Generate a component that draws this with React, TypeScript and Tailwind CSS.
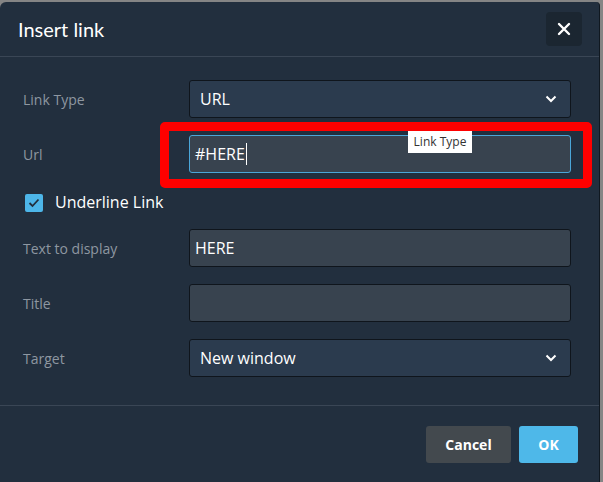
const font = { fontFamily: '"Open Sans", "Noto Sans", Arial, sans-serif' };

function Chevron() {
  return (
    <svg width="12" height="8" viewBox="0 0 12 8" className="shrink-0">
      <polyline points="1.5,1.5 6,6 10.5,1.5" fill="none" stroke="#fff" strokeWidth="2" />
    </svg>
  );
}

function Row({ label, children }: { label: string; children: React.ReactNode }) {
  return (
    <div className="flex h-[38px] items-center">
      <div className="w-[166px] text-[14px] text-[#8e97a1]">{label}</div>
      <div className="w-[382px]">{children}</div>
    </div>
  );
}

function Select({ value }: { value: string }) {
  return (
    <div className="flex h-[38px] items-center justify-between rounded-[3px] border border-[#0f151c] bg-[#2b3b4e] pl-[10px] pr-[13px] text-[16px] text-white">
      <span>{value}</span>
      <Chevron />
    </div>
  );
}

function Input({ value, focused }: { value?: string; focused?: boolean }) {
  return (
    <div
      className={
        "flex h-[38px] items-center rounded-[3px] border bg-[#38434f] pl-[5px] text-[16px] text-white " +
        (focused ? "border-[#4aa6d8]" : "border-[#0f151c]")
      }
    >
      <span>{value}</span>
      {focused && <span className="ml-[1px] h-[22px] w-px bg-white" />}
    </div>
  );
}

export default function App() {
  return (
    <div className="h-[482px] w-[603px] overflow-hidden bg-[#858585]" style={font}>
      <div className="relative mt-[2px] h-[480px] w-[600px] rounded-tl-[6px] rounded-tr-[4px] border-r border-[#101820] bg-[#222f3e]">
        <div className="flex h-[55px] items-center justify-between border-b border-[#3a4655] pl-[18px] pr-[17px]">
          <h1 className="text-[20px] text-white" style={{ fontFamily: 'Lato, "Open Sans", sans-serif' }}>
            Insert link
          </h1>
          <button className="flex h-[34px] w-[36px] items-center justify-center rounded-[4px] bg-[#1b2631]">
            <svg width="14" height="14" viewBox="0 0 14 14">
              <path d="M2 2 L12 12 M12 2 L2 12" stroke="#fff" strokeWidth="2.4" strokeLinecap="round" />
            </svg>
          </button>
        </div>

        <div className="flex flex-col gap-[17px] border-b border-[#3a4655] pb-[28px] pl-[23px] pt-[23px]">
          <Row label="Link Type">
            <Select value="URL" />
          </Row>
          <Row label="Url">
            <Input value="#HERE" focused />
          </Row>
          <div className="flex h-[22px] items-end pl-[2px]">
            <span className="flex h-[18px] w-[18px] items-center justify-center rounded-[2px] bg-[#4db6e9]">
              <svg width="12" height="10" viewBox="0 0 12 10">
                <polyline points="1.5,5 4.5,8 10.5,1.5" fill="none" stroke="#222f3e" strokeWidth="1.8" />
              </svg>
            </span>
            <span className="ml-[12px] text-[16px] leading-[19px] text-white">Underline Link</span>
          </div>
          <Row label="Text to display">
            <Input value="HERE" />
          </Row>
          <Row label="Title">
            <Input />
          </Row>
          <Row label="Target">
            <Select value="New window" />
          </Row>
        </div>

        <div className="flex justify-end gap-[8px] pr-[21px] pt-[20px]">
          <button className="h-[37px] w-[85px] rounded-[3px] bg-[#43494e] text-[14px] font-bold text-white">Cancel</button>
          <button className="h-[37px] w-[59px] rounded-[3px] bg-[#4eb8e9] text-[14px] font-bold text-white">OK</button>
        </div>

        <div className="absolute left-[160px] top-[120px] h-[66px] w-[432px] rounded-[5px] border-[9px] border-[#ff0000]" />
        <div className="absolute left-[408px] top-[129px] flex h-[22px] w-[64px] items-center justify-center bg-white text-[12px] text-[#333]">
          Link Type
        </div>
      </div>
    </div>
  );
}
